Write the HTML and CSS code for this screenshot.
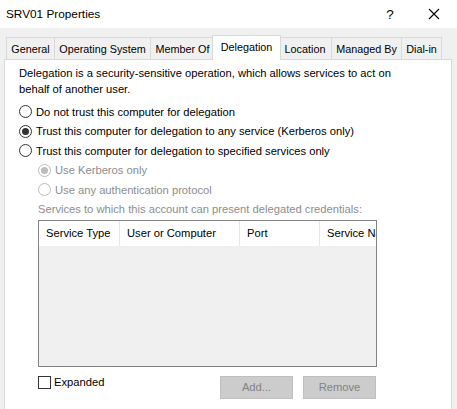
FILE: index.html
```html
<!DOCTYPE html>
<html>
<head>
<meta charset="utf-8">
<link rel="stylesheet" href="styles.css">
</head>
<body>
<div class="titlebar">
  <span class="title">SRV01 Properties</span>
  <span class="tb-help">?</span>
  <span class="tb-close"><svg width="12" height="12" viewBox="0 0 12 12"><path d="M1 1L11 11M11 1L1 11" stroke="#000" stroke-width="1.1" fill="none"/></svg></span>
</div>
<div class="tabs">
  <div class="tab t-general">General</div>
  <div class="tab t-os">Operating System</div>
  <div class="tab t-member">Member Of</div>
  <div class="tab active t-deleg">Delegation</div>
  <div class="tab t-loc">Location</div>
  <div class="tab t-man">Managed By</div>
  <div class="tab t-dial">Dial-in</div>
</div>
<div class="panel">
  <p class="intro">Delegation is a security-sensitive operation, which allows services to act on<br>behalf of another user.</p>
  <div class="radio-row"><span class="radio"></span><span>Do not trust this computer for delegation</span></div>
  <div class="radio-row"><span class="radio checked"></span><span>Trust this computer for delegation to any service (Kerberos only)</span></div>
  <div class="radio-row"><span class="radio"></span><span>Trust this computer for delegation to specified services only</span></div>
  <div class="radio-row sub disabled"><span class="radio checked"></span><span>Use Kerberos only</span></div>
  <div class="radio-row sub disabled"><span class="radio"></span><span>Use any authentication protocol</span></div>
  <div class="services-label">Services to which this account can present delegated credentials:</div>
  <div class="listview">
    <div class="lv-header">
      <div class="col c1">Service Type</div>
      <div class="col c2">User or Computer</div>
      <div class="col c3">Port</div>
      <div class="col c4">Service Na</div>
    </div>
    <div class="lv-body"></div>
  </div>
  <div class="bottom">
    <div class="check-row"><span class="checkbox"></span><span class="check-label">Expanded</span></div>
    <div class="buttons">
      <div class="btn">Add...</div>
      <div class="btn">Remove</div>
    </div>
  </div>
</div>
</body>
</html>
```
FILE: styles.css
```css
* { box-sizing: border-box; }
html, body { margin: 0; padding: 0; }
body {
  background: #f0f0f0;
  font-family: "Liberation Sans", Arial, sans-serif;
  font-size: 11.2px;
  color: #000;
  width: 457px;
  height: 409px;
  overflow: hidden;
}
.titlebar {
  height: 28px;
  background: #fff;
  display: flex;
  align-items: center;
  padding-left: 6px;
}
.title { font-size: 11.8px; flex: 1; }
.tb-help { width: 20px; font-size: 13.5px; margin-right: 28px; text-align: center; }
.tb-close { width: 14px; margin-right: 15px; display: flex; align-items: center; }

.tabs {
  display: flex;
  align-items: flex-end;
  padding-left: 6px;
  margin-top: 7px;
  height: 25px;
  position: relative;
  z-index: 2;
  font-size: 10.8px;
}
.tab {
  height: 22px;
  border: 1px solid #d9d9d9;
  border-bottom: none;
  border-right: none;
  background: #f0f0f0;
  display: flex;
  align-items: center;
  justify-content: center;
  margin-bottom: 1px;
  white-space: nowrap;
}
.tab.t-dial { border-right: 1px solid #d9d9d9; }
.tab.active {
  height: 25px;
  background: #fff;
  border: 1px solid #d9d9d9;
  border-bottom: none;
  margin-left: -2px;
  margin-right: -2px;
  margin-bottom: 0;
  padding-bottom: 3px;
  position: relative;
  z-index: 3;
}
.tab.active + .tab { border-left: none; }
.t-general { width: 48px; }
.t-os { width: 96px; }
.t-member { width: 64px; }
.t-deleg { width: 69px; }
.t-loc { width: 52px; }
.t-man { width: 70px; }
.t-dial { width: 41px; }

.panel {
  margin: -1px 5px 0 4px;
  height: 351px;
  background: #fff;
  border: 1px solid #d9d9d9;
  border-bottom: none;
  padding: 5px 0 0 14px;
  position: relative;
  z-index: 1;
}
.intro { margin: 0 0 5px 0; line-height: 16px; }
.radio-row {
  display: flex;
  align-items: center;
  height: 19.5px;
}
.radio-row.sub { padding-left: 19px; }
.radio {
  width: 13px;
  height: 13px;
  border: 1px solid #333;
  border-radius: 50%;
  background: #fff;
  margin-right: 4px;
  display: flex;
  align-items: center;
  justify-content: center;
  flex: none;
}
.radio.checked::after {
  content: "";
  width: 7px;
  height: 7px;
  border-radius: 50%;
  background: #333;
}
.disabled { color: #8d8d8d; }
.disabled .radio { border-color: #bcbcbc; }
.disabled .radio.checked::after { background: #bcbcbc; }
.services-label {
  color: #8d8d8d;
  padding-left: 19px;
  margin-top: 1px;
  line-height: 16px;
}
.listview {
  margin: 3px 0 0 19px;
  width: 339px;
  height: 147px;
  border: 1px solid #828282;
  background: #f0f0f0;
  display: flex;
  flex-direction: column;
}
.lv-header {
  height: 25px;
  background: #fff;
  display: flex;
  overflow: hidden;
  white-space: nowrap;
}
.col {
  padding-left: 7px;
  display: flex;
  align-items: center;
  border-right: 1px solid #e5e5e5;
  flex: none;
  overflow: hidden;
}
.c1 { width: 81px; }
.c2 { width: 120px; }
.c3 { width: 80px; }
.c4 { width: 56px; border-right: none; }
.lv-body { flex: 1; }
.bottom {
  display: flex;
  margin-left: 19px;
  width: 339px;
  margin-top: 8px;
}
.check-row { display: flex; align-items: flex-start; flex: 1; }
.checkbox {
  width: 13px;
  height: 13px;
  border: 1px solid #333;
  background: #fff;
  margin-right: 3px;
  margin-top: 1px;
}
.check-label { line-height: 14px; }
.buttons { display: flex; gap: 10px; margin-top: 1px; margin-right: 1px; }
.btn {
  width: 73px;
  height: 23px;
  background: #cccccc;
  border: 1px solid #bfbfbf;
  color: #838383;
  display: flex;
  align-items: center;
  justify-content: center;
}
```
